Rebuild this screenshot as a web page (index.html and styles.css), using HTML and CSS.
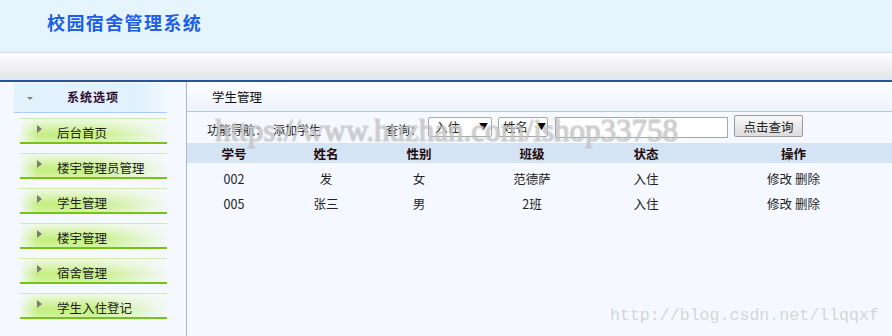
FILE: index.html
```html
<!DOCTYPE html>
<html lang="zh-CN">
<head>
<meta charset="utf-8">
<title>校园宿舍管理系统</title>
<link rel="stylesheet" href="styles.css">
</head>
<body>
<div class="header"><h1 class="title">校园宿舍管理系统</h1></div>
<div class="navbar"></div>
<div class="main">
  <aside class="sidebar">
    <div class="side-head"><span class="down"></span><span class="side-title">系统选项</span></div>
    <ul class="menu">
      <li class="item"><span class="tri"></span>后台首页</li>
      <li class="item"><span class="tri"></span>楼宇管理员管理</li>
      <li class="item"><span class="tri"></span>学生管理</li>
      <li class="item"><span class="tri"></span>楼宇管理</li>
      <li class="item"><span class="tri"></span>宿舍管理</li>
      <li class="item"><span class="tri"></span>学生入住登记</li>
    </ul>
  </aside>
  <section class="content">
    <div class="content-head">学生管理</div>
    <div class="toolbar">
      <span class="lbl">功能导航：</span>
      <span class="link">添加学生</span>
      <span class="lbl query">查询：</span>
      <span class="select s1"><span>入住</span><span class="arrow">▼</span></span>
      <span class="select s2"><span>姓名</span><span class="arrow">▼</span></span>
      <span class="input"></span>
      <span class="btn">点击查询</span>
    </div>
    <table class="grid">
      <colgroup><col class="c1"><col class="c2"><col class="c3"><col class="c4"><col class="c5"><col class="c6"></colgroup>
      <thead><tr><th>学号</th><th>姓名</th><th>性别</th><th>班级</th><th>状态</th><th>操作</th></tr></thead>
      <tbody>
        <tr><td>002</td><td>发</td><td>女</td><td>范德萨</td><td>入住</td><td>修改 删除</td></tr>
        <tr><td>005</td><td>张三</td><td>男</td><td>2班</td><td>入住</td><td>修改 删除</td></tr>
      </tbody>
    </table>
  </section>
</div>
<div class="wm1">https://www.huzhan.com/ishop33758</div>
<div class="wm2">http://blog.csdn.net/llqqxf</div>
</body>
</html>
```
FILE: styles.css
```css
* { box-sizing: border-box; }
html, body { margin: 0; padding: 0; }
body {
  width: 892px; height: 336px; overflow: hidden; position: relative;
  background: #f5f9ff;
  font-family: "Noto Sans CJK SC", "Liberation Sans", sans-serif;
  font-size: 12px; color: #222;
}
.header { height: 52px; background: #e6f4fe; padding: 11px 0 0 47px; }
.title { margin: 0; font-size: 18px; line-height: 22px; font-weight: bold; color: #1d5fe6; letter-spacing: 1.4px; }
.navbar {
  height: 30px; border-top: 1px solid #d8dae6; border-bottom: 2px solid #2a5490;
  background: linear-gradient(#ffffff, #f2f3f5 40%, #e2e5ea);
}
.main { display: flex; height: 254px; }
.sidebar { width: 187px; border-right: 1px solid #a4b8d0; padding-top: 1px; }
.side-head {
  margin-left: 14px; width: 153px; height: 30px; display: flex; align-items: center;
  background: linear-gradient(to right, #e4f2fd, #e0f0fd 80%, rgba(240,248,255,0.6));
  border-bottom: 1px solid #a6d0f2;
}
.down { width: 0; height: 0; margin-left: 13px; border-left: 3px solid transparent; border-right: 3px solid transparent; border-top: 3px solid #808080; margin-top: 1px; }
.side-title { margin-left: 34px; font-weight: bold; color: #2a0a2a; letter-spacing: 1px; margin-top: -2px; }
.menu { list-style: none; margin: 5px 0 0 20px; padding: 0; }
.item {
  width: 147px; height: 26px; margin-bottom: 9px; display: flex; align-items: center;
  padding-top: 3px; color: #222; font-size: 12.5px;
  border-top: 1px solid #cdeea8; border-bottom: 2px solid #74c418;
  background:
    linear-gradient(to right, rgba(245,249,255,0.9) 0, rgba(245,249,255,0) 12%, rgba(245,249,255,0) 50%, rgba(245,249,255,0.95) 100%),
    linear-gradient(#f0f9e4, #c4ee80 65%, #d2f3a0);
}
.tri { width: 0; height: 0; margin-left: 17px; margin-right: 15px; border-top: 4px solid transparent; border-bottom: 4px solid transparent; border-left: 5px solid #7a7a7a; margin-top: -6px; }
.content { flex: 1; }
.content-head {
  height: 30px; padding-left: 25px; line-height: 30px; font-size: 12.5px; color: #111;
  background: linear-gradient(#fdfeff, #eef3fa); border-bottom: 1px solid #b8c8d8;
}
.toolbar { height: 31px; display: flex; align-items: center; padding-left: 20px; padding-top: 3px; }
.lbl, .link { color: #222; }
.link { margin-left: 6px; }
.query { margin-left: 65px; }
.select {
  display: flex; justify-content: space-between; align-items: center;
  height: 20px; margin-left: 6px; margin-top: -5px; padding: 0 3px 0 6px;
  background: #fff; border: 1px solid #a8a8a8; border-radius: 2px; font-size: 12.5px;
}
.s1 { width: 64px; }
.s2 { width: 50px; padding-left: 4px; padding-right: 1px; }
.arrow { font-size: 9px; color: #000; }
.input { width: 173px; height: 21px; margin-left: 7px; margin-top: -4px; background: #fff; border: 1px solid #a6a6a6; }
.btn {
  width: 69px; height: 22px; margin-left: 6px; margin-top: -6px;
  display: flex; align-items: center; justify-content: center; font-size: 12.5px;
  border: 1px solid #9a9a9a; border-radius: 2px; background: linear-gradient(#f8f8f8, #dcdcdc);
}
.grid { width: 705px; border-collapse: collapse; table-layout: fixed; }
.c1 { width: 94px; } .c2 { width: 90px; } .c3 { width: 96px; } .c4 { width: 130px; } .c5 { width: 98px; } .c6 { width: 197px; }
.grid th { height: 20px; padding: 0; background: #d4e4f4; font-weight: bold; color: #220808; font-size: 12.5px; }
.grid td { height: 25px; padding: 0; text-align: center; color: #222; font-size: 12.5px; }
.grid tbody tr:first-child td { padding-top: 3px; height: 28px; }
.wm1 {
  position: absolute; left: 215px; top: 115px; line-height: 32px;
  font-family: "Liberation Serif", serif; font-size: 31px;
  color: rgba(255,255,255,0.3);
  text-shadow: 1px 0 rgba(170,170,170,0.38), -1px 0 rgba(170,170,170,0.38), 0 1px rgba(170,170,170,0.38), 0 -1px rgba(170,170,170,0.38);
  pointer-events: none; white-space: nowrap;
}
.wm2 {
  position: absolute; left: 610px; top: 305px; line-height: 22px;
  font-family: "Liberation Mono", monospace; font-size: 16.6px; color: #d4d6d8;
  white-space: nowrap;
}
```
